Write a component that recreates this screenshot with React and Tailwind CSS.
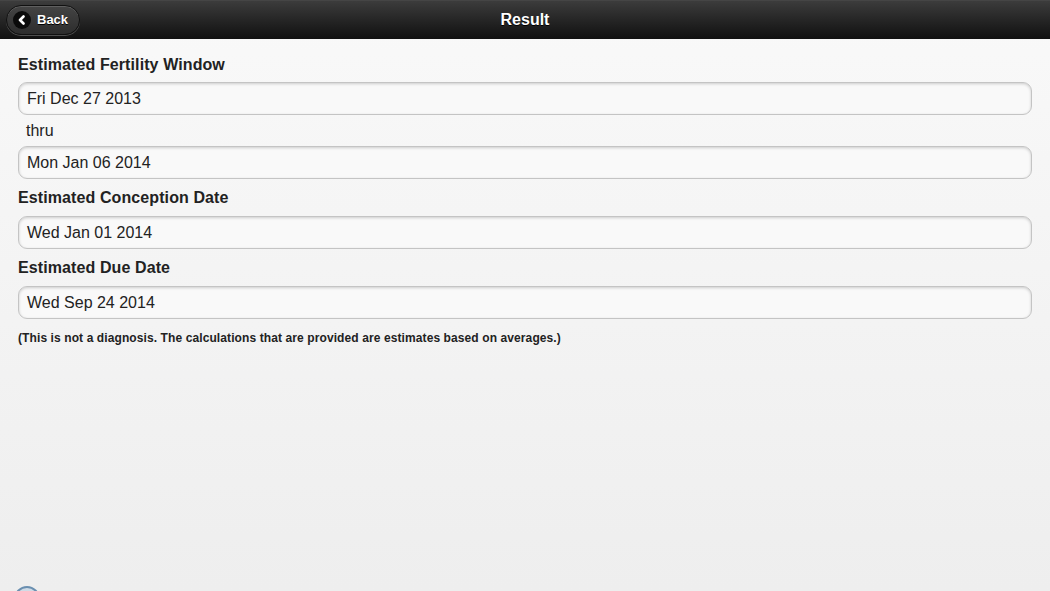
import React from "react";

const font = { fontFamily: '"Liberation Sans", Arial, Helvetica, sans-serif' };

function Field({ value }) {
  return (
    <div className="h-[33px] w-full rounded-[9px] border border-[#c4c4c4] bg-[#f9f9f9] shadow-[inset_0_1px_3px_rgba(0,0,0,0.18)] flex items-center pl-[8px] text-[16px] text-[#222]">
      {value}
    </div>
  );
}

function Label({ children }) {
  return <div className="text-[16px] font-bold text-[#222] leading-[18px] tracking-[0.1px]">{children}</div>;
}

export default function App() {
  return (
    <div style={font} className="w-[1050px] h-[591px] overflow-hidden flex flex-col bg-gradient-to-b from-[#f9f9f9] to-[#eeeeee]">
      <div className="h-[39px] shrink-0 border-t border-[#454545] bg-gradient-to-b from-[#3c3c3c] to-[#111111] flex items-center relative">
        <div className="ml-[6px] h-[30px] w-[74px] rounded-full border border-[#111] bg-gradient-to-b from-[#444] to-[#2d2d2d] shadow-[0_1px_0_rgba(255,255,255,0.25),inset_0_1px_0_rgba(255,255,255,0.15)] flex items-center pl-[6px] gap-[6px]">
          <div className="w-[18px] h-[18px] rounded-full bg-[#0b0b0b] flex items-center justify-center">
            <svg width="10" height="10" viewBox="0 0 10 10">
              <path d="M6.5 1.5 L3 5 L6.5 8.5" stroke="#fff" strokeWidth="2.6" fill="none" strokeLinecap="round" strokeLinejoin="round" />
            </svg>
          </div>
          <span className="text-white text-[13px] font-bold [text-shadow:0_1px_0_#000]">Back</span>
        </div>
        <div className="absolute left-0 right-0 top-0 bottom-0 flex items-center justify-center pointer-events-none">
          <span className="text-white text-[16px] font-bold [text-shadow:0_1px_0_#000]">Result</span>
        </div>
      </div>
      <div className="px-[18px] pr-[18px] pt-[17px] flex flex-col">
        <Label>Estimated Fertility Window</Label>
        <div className="mt-[8px]"><Field value="Fri Dec 27 2013" /></div>
        <div className="pl-[8px] mt-[7px] text-[16px] text-[#222] leading-[18px]">thru</div>
        <div className="mt-[6px]"><Field value="Mon Jan 06 2014" /></div>
        <div className="mt-[10px]"><Label>Estimated Conception Date</Label></div>
        <div className="mt-[9px]"><Field value="Wed Jan 01 2014" /></div>
        <div className="mt-[10px]"><Label>Estimated Due Date</Label></div>
        <div className="mt-[9px]"><Field value="Wed Sep 24 2014" /></div>
        <div className="mt-[12px] text-[12px] font-bold text-[#222] leading-[14px] tracking-[0.1px]">
          (This is not a diagnosis. The calculations that are provided are estimates based on averages.)
        </div>
        <div className="mt-[241px] ml-[-4px] w-[26px] h-[26px] rounded-full border-2 border-[#6a8fb0] bg-[#cfdbe6]" />
      </div>
    </div>
  );
}
